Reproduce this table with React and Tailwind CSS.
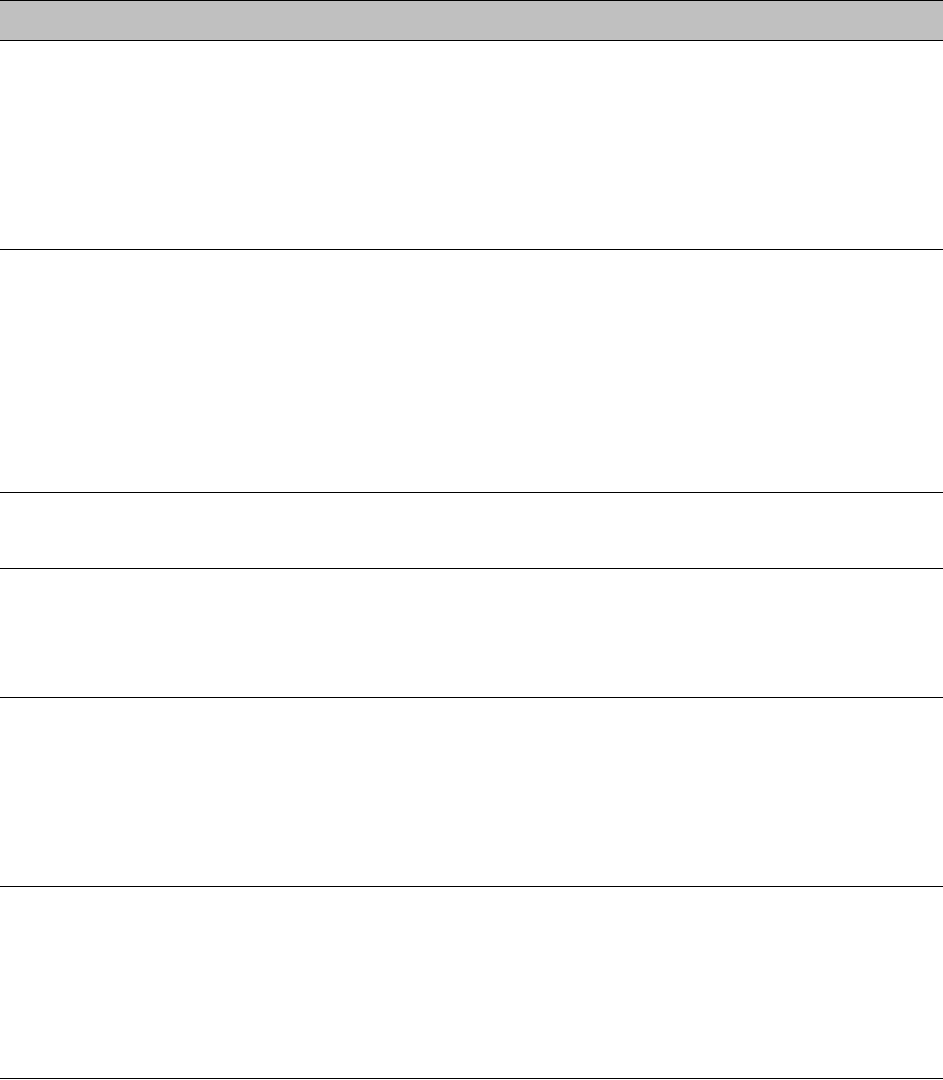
// App.jsx

import React from 'react';

const rows = [208, 242, 75, 128, 188, 191];

function App() {
  return (
    <div className="w-full bg-white" style={{ fontFamily: '"Liberation Sans", Arial, sans-serif' }}>
      <div className="w-full">
        <div className="h-[41px] bg-[#c0c0c0] border-t border-b border-black"></div>
        {rows.map((h, i) => (
          <div key={i} className="w-full border-b border-black" style={{ height: h + 1 }}></div>
        ))}
      </div>
    </div>
  );
}

export default App;
